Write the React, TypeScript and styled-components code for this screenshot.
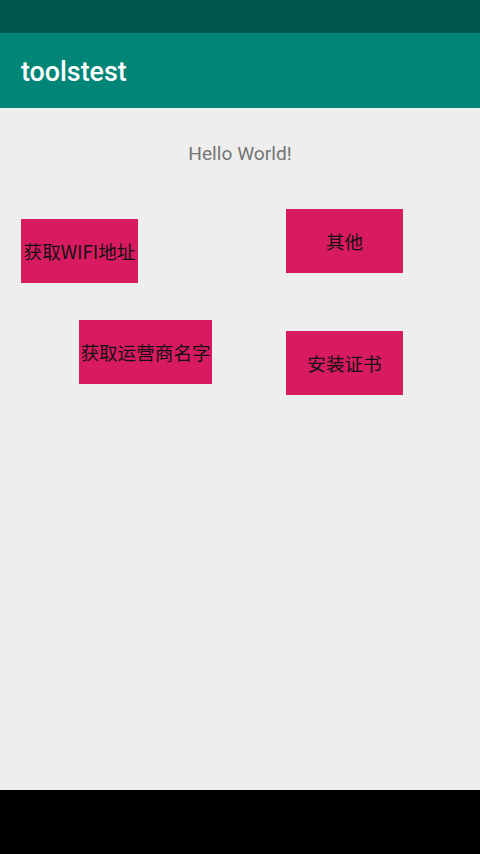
import React from "react";
import styled, { createGlobalStyle } from "styled-components";

const Global = createGlobalStyle`
  html, body { margin: 0; padding: 0; }
  body { width: 480px; height: 854px; overflow: hidden; font-family: Roboto, "Noto Sans CJK SC", sans-serif; }
  #root { width: 480px; height: 854px; }
`;

const Screen = styled.div`
  display: flex;
  flex-direction: column;
  width: 480px;
  height: 854px;
  background: #eeeeee;
`;

const StatusBar = styled.div`
  height: 33px;
  flex: none;
  background: #00574b;
`;

const AppBar = styled.header`
  height: 75px;
  flex: none;
  background: #008577;
  display: flex;
  align-items: center;
  padding-left: 21px;
  box-sizing: border-box;
`;

const Title = styled.h1`
  margin: 0;
  font-family: Roboto, sans-serif;
  font-weight: 500;
  font-size: 26.8px;
  color: #ffffff;
  line-height: 1;
  margin-top: 4px;
`;

const Content = styled.main`
  flex: 1;
  display: flex;
  flex-direction: column;
`;

const Hello = styled.p`
  margin: 35px 0 0;
  height: 22px;
  line-height: 22px;
  text-align: center;
  font-family: Roboto, sans-serif;
  font-size: 19.2px;
  color: #757575;
`;

const Columns = styled.div`
  display: flex;
  margin-top: -1px;
`;

const Column = styled.div<{ $width?: number }>`
  display: flex;
  flex-direction: column;
  align-items: flex-start;
  width: ${(p) => (p.$width ? `${p.$width}px` : "auto")};
  flex: ${(p) => (p.$width ? "none" : "1")};
`;

const Button = styled.button<{ $top: number; $left?: number; $w?: number }>`
  margin-top: ${(p) => p.$top}px;
  margin-left: ${(p) => p.$left ?? 0}px;
  width: ${(p) => p.$w ?? 117}px;
  height: 64px;
  padding: 0 0 2px;
  border: none;
  border-radius: 0;
  background: #d81b60;
  color: #111111;
  font-family: "Noto Sans CJK SC", sans-serif;
  font-size: 18.6px;
  white-space: nowrap;
  display: flex;
  align-items: center;
  justify-content: center;
  cursor: pointer;
`;

const NavBar = styled.div`
  height: 64px;
  flex: none;
  background: #000000;
`;

export default function App() {
  return (
    <>
      <Global />
      <Screen>
        <StatusBar />
        <AppBar>
          <Title>toolstest</Title>
        </AppBar>
        <Content>
          <Hello>Hello World!</Hello>
          <Columns>
            <Column $width={286}>
              <Button $top={55} $left={21}>获取WIFI地址</Button>
              <Button $top={37} $left={79} $w={133}>获取运营商名字</Button>
            </Column>
            <Column>
              <Button $top={45}>其他</Button>
              <Button $top={58}>安装证书</Button>
            </Column>
          </Columns>
        </Content>
        <NavBar />
      </Screen>
    </>
  );
}
